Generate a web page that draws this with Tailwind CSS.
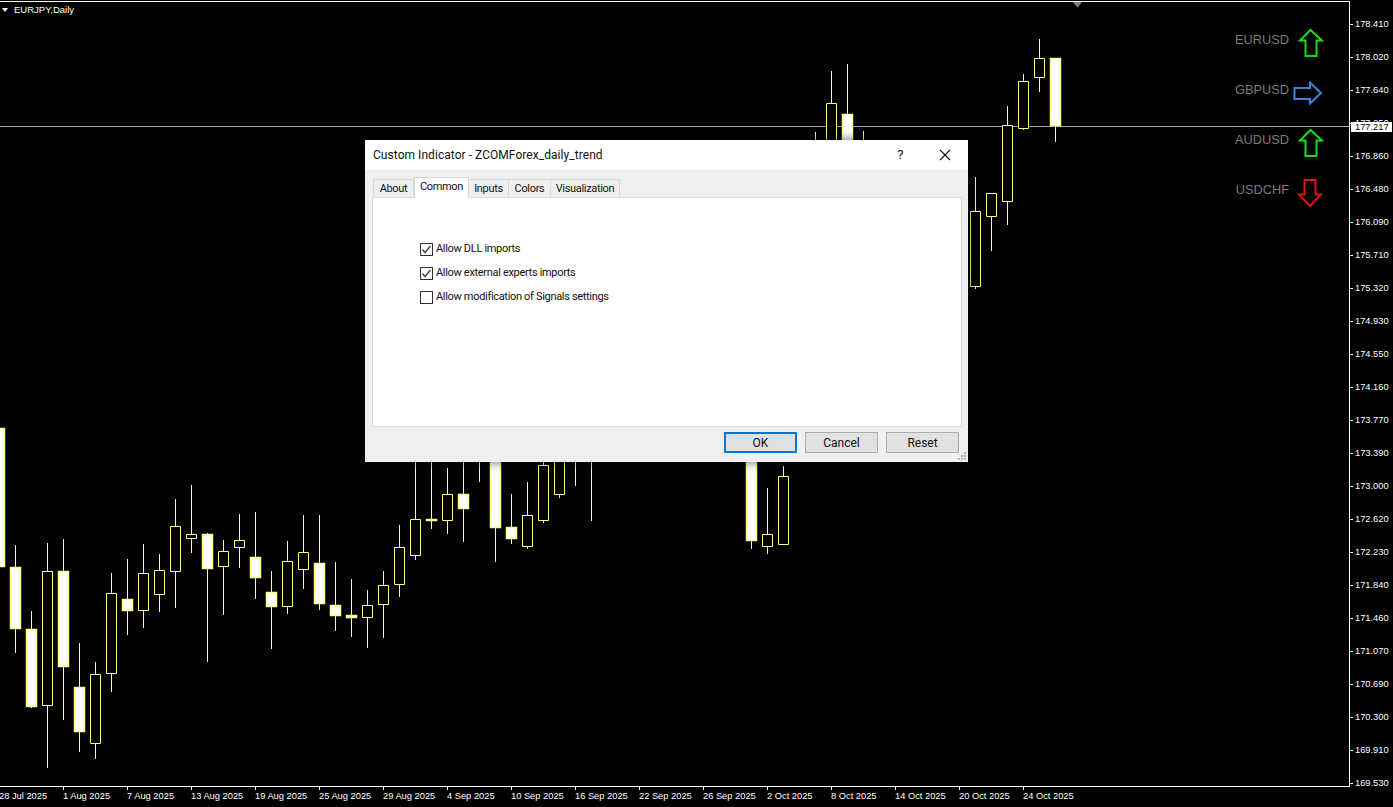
<!DOCTYPE html>
<html lang="en">
<head>
<meta charset="UTF-8">
<title>EURJPY,Daily</title>
<script src="https://cdn.jsdelivr.net/npm/@tailwindcss/browser@4"></script>
</head>
<body class="bg-black">
<div class="relative w-[1393px] h-[807px] overflow-hidden bg-black font-['Liberation_Sans',sans-serif]">

  <!-- chart + axes -->
  <div class="flex flex-col h-full pt-px">
    <div class="flex h-[785px]">
      <div class="w-[1350px] shrink-0 border-t border-r border-white"></div>
      <div class="flex-1 pt-[7px] text-[9.3px] text-white">
        <div class="flex items-center h-[33px]"><span class="w-[3px] h-px bg-white mr-[2px]"></span>178.410</div>
        <div class="flex items-center h-[33px]"><span class="w-[3px] h-px bg-white mr-[2px]"></span>178.020</div>
        <div class="flex items-center h-[33px]"><span class="w-[3px] h-px bg-white mr-[2px]"></span>177.640</div>
        <div class="flex items-center h-[33px]"><span class="w-[3px] h-px bg-white mr-[2px]"></span>177.250</div>
        <div class="flex items-center h-[33px]"><span class="w-[3px] h-px bg-white mr-[2px]"></span>176.860</div>
        <div class="flex items-center h-[33px]"><span class="w-[3px] h-px bg-white mr-[2px]"></span>176.480</div>
        <div class="flex items-center h-[33px]"><span class="w-[3px] h-px bg-white mr-[2px]"></span>176.090</div>
        <div class="flex items-center h-[33px]"><span class="w-[3px] h-px bg-white mr-[2px]"></span>175.710</div>
        <div class="flex items-center h-[33px]"><span class="w-[3px] h-px bg-white mr-[2px]"></span>175.320</div>
        <div class="flex items-center h-[33px]"><span class="w-[3px] h-px bg-white mr-[2px]"></span>174.930</div>
        <div class="flex items-center h-[33px]"><span class="w-[3px] h-px bg-white mr-[2px]"></span>174.550</div>
        <div class="flex items-center h-[33px]"><span class="w-[3px] h-px bg-white mr-[2px]"></span>174.160</div>
        <div class="flex items-center h-[33px]"><span class="w-[3px] h-px bg-white mr-[2px]"></span>173.770</div>
        <div class="flex items-center h-[33px]"><span class="w-[3px] h-px bg-white mr-[2px]"></span>173.390</div>
        <div class="flex items-center h-[33px]"><span class="w-[3px] h-px bg-white mr-[2px]"></span>173.000</div>
        <div class="flex items-center h-[33px]"><span class="w-[3px] h-px bg-white mr-[2px]"></span>172.620</div>
        <div class="flex items-center h-[33px]"><span class="w-[3px] h-px bg-white mr-[2px]"></span>172.230</div>
        <div class="flex items-center h-[33px]"><span class="w-[3px] h-px bg-white mr-[2px]"></span>171.840</div>
        <div class="flex items-center h-[33px]"><span class="w-[3px] h-px bg-white mr-[2px]"></span>171.460</div>
        <div class="flex items-center h-[33px]"><span class="w-[3px] h-px bg-white mr-[2px]"></span>171.070</div>
        <div class="flex items-center h-[33px]"><span class="w-[3px] h-px bg-white mr-[2px]"></span>170.690</div>
        <div class="flex items-center h-[33px]"><span class="w-[3px] h-px bg-white mr-[2px]"></span>170.300</div>
        <div class="flex items-center h-[33px]"><span class="w-[3px] h-px bg-white mr-[2px]"></span>169.910</div>
        <div class="flex items-center h-[33px]"><span class="w-[3px] h-px bg-white mr-[2px]"></span>169.530</div>
      </div>
    </div>
    <div class="w-[1351px] border-t border-white flex -ml-px text-[9.3px] leading-[11px] text-white">
      <div class="w-[64px] shrink-0"><div class="w-px h-[3px] bg-white"></div><div class="mt-px whitespace-nowrap">28 Jul 2025</div></div>
      <div class="w-[64px] shrink-0"><div class="w-px h-[3px] bg-white"></div><div class="mt-px whitespace-nowrap">1 Aug 2025</div></div>
      <div class="w-[64px] shrink-0"><div class="w-px h-[3px] bg-white"></div><div class="mt-px whitespace-nowrap">7 Aug 2025</div></div>
      <div class="w-[64px] shrink-0"><div class="w-px h-[3px] bg-white"></div><div class="mt-px whitespace-nowrap">13 Aug 2025</div></div>
      <div class="w-[64px] shrink-0"><div class="w-px h-[3px] bg-white"></div><div class="mt-px whitespace-nowrap">19 Aug 2025</div></div>
      <div class="w-[64px] shrink-0"><div class="w-px h-[3px] bg-white"></div><div class="mt-px whitespace-nowrap">25 Aug 2025</div></div>
      <div class="w-[64px] shrink-0"><div class="w-px h-[3px] bg-white"></div><div class="mt-px whitespace-nowrap">29 Aug 2025</div></div>
      <div class="w-[64px] shrink-0"><div class="w-px h-[3px] bg-white"></div><div class="mt-px whitespace-nowrap">4 Sep 2025</div></div>
      <div class="w-[64px] shrink-0"><div class="w-px h-[3px] bg-white"></div><div class="mt-px whitespace-nowrap">10 Sep 2025</div></div>
      <div class="w-[64px] shrink-0"><div class="w-px h-[3px] bg-white"></div><div class="mt-px whitespace-nowrap">16 Sep 2025</div></div>
      <div class="w-[64px] shrink-0"><div class="w-px h-[3px] bg-white"></div><div class="mt-px whitespace-nowrap">22 Sep 2025</div></div>
      <div class="w-[64px] shrink-0"><div class="w-px h-[3px] bg-white"></div><div class="mt-px whitespace-nowrap">26 Sep 2025</div></div>
      <div class="w-[64px] shrink-0"><div class="w-px h-[3px] bg-white"></div><div class="mt-px whitespace-nowrap">2 Oct 2025</div></div>
      <div class="w-[64px] shrink-0"><div class="w-px h-[3px] bg-white"></div><div class="mt-px whitespace-nowrap">8 Oct 2025</div></div>
      <div class="w-[64px] shrink-0"><div class="w-px h-[3px] bg-white"></div><div class="mt-px whitespace-nowrap">14 Oct 2025</div></div>
      <div class="w-[64px] shrink-0"><div class="w-px h-[3px] bg-white"></div><div class="mt-px whitespace-nowrap">20 Oct 2025</div></div>
      <div class="w-[64px] shrink-0"><div class="w-px h-[3px] bg-white"></div><div class="mt-px whitespace-nowrap">24 Oct 2025</div></div>
    </div>
  </div>

  <!-- candles -->
  <svg class="absolute left-0 top-0" width="1349" height="786" fill="none">
    <path stroke="#a8a89c" d="M0 126.500H1349"/>
    <path stroke="#ffff80" d="M15.500 545V653M31.500 611V708M47.500 543V768M63.500 539V720M79.500 643V752M95.500 662V759M111.500 573V692M127.500 559V635M143.500 544V628M159.500 554V612M175.500 499V608M191.500 485V553M207.500 533V662M223.500 540V615M239.500 514V568M255.500 512V599M271.500 571V649M287.500 541V614M303.500 515V589M319.500 515V610M335.500 562V631M351.500 579V637M367.500 590V648M383.500 571V638M399.500 525V597M415.500 450V560M431.500 450V529M447.500 468V534M463.500 450V542M479.500 450V482M495.500 450V562M511.500 494V544M527.500 482V549M543.500 450V523M559.500 450V498M575.500 450V486M591.500 450V521M751.500 450V549M767.500 488V554M783.500 466V545M815.500 132V150M831.500 71V150M847.500 64V150M863.500 131V150M975.500 177V289M991.500 193V251M1007.500 106V225M1023.500 74V130M1039.500 39V92M1055.500 58V142"/>
    <path stroke="#ffff80" fill="#000" d="M42.500 571.500h10V705.500h-10zM90.500 674.500h10V743.500h-10zM106.500 593.500h10V673.500h-10zM138.500 573.500h10V610.500h-10zM154.500 570.500h10V594.500h-10zM170.500 526.500h10V571.500h-10zM186.500 534.500h10V538.500h-10zM218.500 551.500h10V566.500h-10zM234.500 540.500h10V547.500h-10zM282.500 561.500h10V606.500h-10zM298.500 552.500h10V569.500h-10zM362.500 605.500h10V617.500h-10zM378.500 585.500h10V604.500h-10zM394.500 547.500h10V584.500h-10zM410.500 519.500h10V555.500h-10zM442.500 494.500h10V520.500h-10zM522.500 515.500h10V546.500h-10zM538.500 465.500h10V520.500h-10zM554.500 450.500h10V494.500h-10zM570.500 450.500h10V460.500h-10zM762.500 534.500h10V546.500h-10zM778.500 476.500h10V544.500h-10zM826.500 103.500h10V150.500h-10zM970.500 211.500h10V286.500h-10zM986.500 193.500h10V216.500h-10zM1002.500 125.500h10V201.500h-10zM1018.500 81.500h10V128.500h-10zM1034.500 58.500h10V77.500h-10z"/>
    <path stroke="#ffff80" stroke-width="1.500" fill="#fff" d="M-5.500 428.500h10V566.500h-10zM10.500 567.500h10V628.500h-10zM26.500 629.500h10V706.500h-10zM58.500 571.500h10V666.500h-10zM74.500 687.500h10V731.500h-10zM122.500 599.500h10V610.500h-10zM202.500 534.500h10V568.500h-10zM250.500 557.500h10V577.500h-10zM266.500 592.500h10V606.500h-10zM314.500 563.500h10V603.500h-10zM330.500 605.500h10V615.500h-10zM346.500 615.500h10V617.500h-10zM426.500 519.500h10V520.500h-10zM458.500 494.500h10V508.500h-10zM490.500 450.500h10V527.500h-10zM506.500 527.500h10V538.500h-10zM746.500 450.500h10V540.500h-10zM842.500 114.500h10V150.500h-10zM1050.500 58.500h10V125.500h-10z"/>
  </svg>

  <!-- symbol label -->
  <div class="absolute left-[2px] top-[3px] flex items-center gap-[6px] text-[9.500px] text-white">
    <svg width="6" height="4" viewBox="0 0 6 4"><path d="M0 0H6L3 4z" fill="#fff"/></svg>
    <span>EURJPY,Daily</span>
  </div>

  <!-- shift marker -->
  <svg class="absolute left-[1073px] top-[2px]" width="9" height="6" viewBox="0 0 9 6"><path d="M0 0H9L4.500 5.500z" fill="#808080"/></svg>

  <!-- current price -->
  <div class="absolute left-[1351px] top-[122px] w-[41px] h-[10px] bg-white text-black text-[9.300px] leading-[10px] pl-[4px]">177.217</div>

  <!-- trend panel -->
  <div class="absolute left-[1220px] top-[15px] w-[110px] text-[12.800px] text-[#7c7c7c]">
    <div class="flex items-center h-[50px]">
      <span class="w-[69px] text-right">EURUSD</span>
      <svg class="ml-[9px] mt-[6px]" width="26" height="30" viewBox="0 0 26 30" fill="none"><path d="M12.500 2L2 12.500H7.500V28H18.500V12.500H24z" stroke="#1bdc1b" stroke-width="2"/></svg>
    </div>
    <div class="flex items-center h-[50px]">
      <span class="w-[69px] text-right">GBPUSD</span>
      <svg class="ml-[4px] mt-[6px]" width="30" height="24" viewBox="0 0 30 24" fill="none"><path d="M28 12L17 1.500V7H1.500V18H17V22.500z" stroke="#3a84e0" stroke-width="2"/></svg>
    </div>
    <div class="flex items-center h-[50px]">
      <span class="w-[69px] text-right">AUDUSD</span>
      <svg class="ml-[9px] mt-[6px]" width="26" height="30" viewBox="0 0 26 30" fill="none"><path d="M12.500 2L2 12.500H7.500V28H18.500V12.500H24z" stroke="#1bdc1b" stroke-width="2"/></svg>
    </div>
    <div class="flex items-center h-[50px]">
      <span class="w-[69px] text-right">USDCHF</span>
      <svg class="ml-[8px] mt-[6px]" width="26" height="30" viewBox="0 0 26 30" fill="none"><path d="M13 28L2 16.500H7.500V2H18.500V16.500H24z" stroke="#dc1616" stroke-width="2"/></svg>
    </div>
  </div>

  <!-- dialog -->
  <div class="absolute left-[365px] top-[140px] w-[603px] h-[322px] flex flex-col bg-[#f0f0f0] shadow-[0_0_10px_rgba(0,0,0,0.6)] font-['Roboto',sans-serif] text-[11px] tracking-[-0.32px] text-[#111111]">
    <div class="h-[30px] bg-white flex items-center pl-[8px] pr-[17px]">
      <span class="flex-1 text-[12px] tracking-[0.05px]">Custom Indicator - ZCOMForex_daily_trend</span>
      <span class="text-[13px] mr-[36px]">?</span>
      <svg width="12" height="12" viewBox="0 0 12 12" fill="none"><path d="M1 1L11 11M11 1L1 11" stroke="#111" stroke-width="1.100"/></svg>
    </div>
    <div class="flex items-end h-[27px] pl-[8px] pr-[7px]">
      <div class="w-[41px] h-[18px] pt-px border border-b-0 border-[#d9d9d9] flex items-center justify-center">About</div>
      <div class="relative z-10 w-[55px] h-[21px] -mb-px pb-px bg-white border border-b-0 border-[#d9d9d9] flex items-center justify-center">Common</div>
      <div class="w-[40px] h-[18px] pt-px border border-b-0 border-l-0 border-[#d9d9d9] flex items-center justify-center">Inputs</div>
      <div class="w-[42px] h-[18px] pt-px border border-b-0 border-l-0 border-[#d9d9d9] flex items-center justify-center">Colors</div>
      <div class="w-[69px] h-[18px] pt-px border border-b-0 border-l-0 border-[#d9d9d9] flex items-center justify-center">Visualization</div>
    </div>
    <div class="ml-[7px] mr-[6px] h-[230px] bg-white border border-[#d9d9d9] pl-[47px] pt-[45px] flex flex-col gap-[11px]">
      <label class="flex items-center h-[13px] gap-[3px]">
        <svg width="13" height="13" viewBox="0 0 13 13" fill="none"><rect x=".5" y=".5" width="12" height="12" stroke="#333"/><path d="M2.500 6.500L5 9.500L10.500 3" stroke="#333" stroke-width="1.200"/></svg>
        Allow DLL imports
      </label>
      <label class="flex items-center h-[13px] gap-[3px]">
        <svg width="13" height="13" viewBox="0 0 13 13" fill="none"><rect x=".5" y=".5" width="12" height="12" stroke="#333"/><path d="M2.500 6.500L5 9.500L10.500 3" stroke="#333" stroke-width="1.200"/></svg>
        Allow external experts imports
      </label>
      <label class="flex items-center h-[13px] gap-[3px]">
        <svg width="13" height="13" viewBox="0 0 13 13" fill="none"><rect x=".5" y=".5" width="12" height="12" stroke="#333"/></svg>
        Allow modification of Signals settings
      </label>
    </div>
    <div class="flex justify-end gap-[8px] mt-[5px] pr-[9px] text-[12px] tracking-normal">
      <button class="w-[73px] h-[21px] bg-[#e1e1e1] border-2 border-[#0078d7]">OK</button>
      <button class="w-[73px] h-[21px] bg-[#e1e1e1] border border-[#adadad]">Cancel</button>
      <button class="w-[73px] h-[21px] bg-[#e1e1e1] border border-[#adadad]">Reset</button>
    </div>
    <svg class="absolute right-[2px] bottom-[2px]" width="8" height="8" viewBox="0 0 8 8" fill="#b5b5b5"><path d="M6 0h2v2H6zM3 3h2v2H3zM6 3h2v2H6zM0 6h2v2H0zM3 6h2v2H3zM6 6h2v2H6z"/></svg>
  </div>
</div>
</body>
</html>
